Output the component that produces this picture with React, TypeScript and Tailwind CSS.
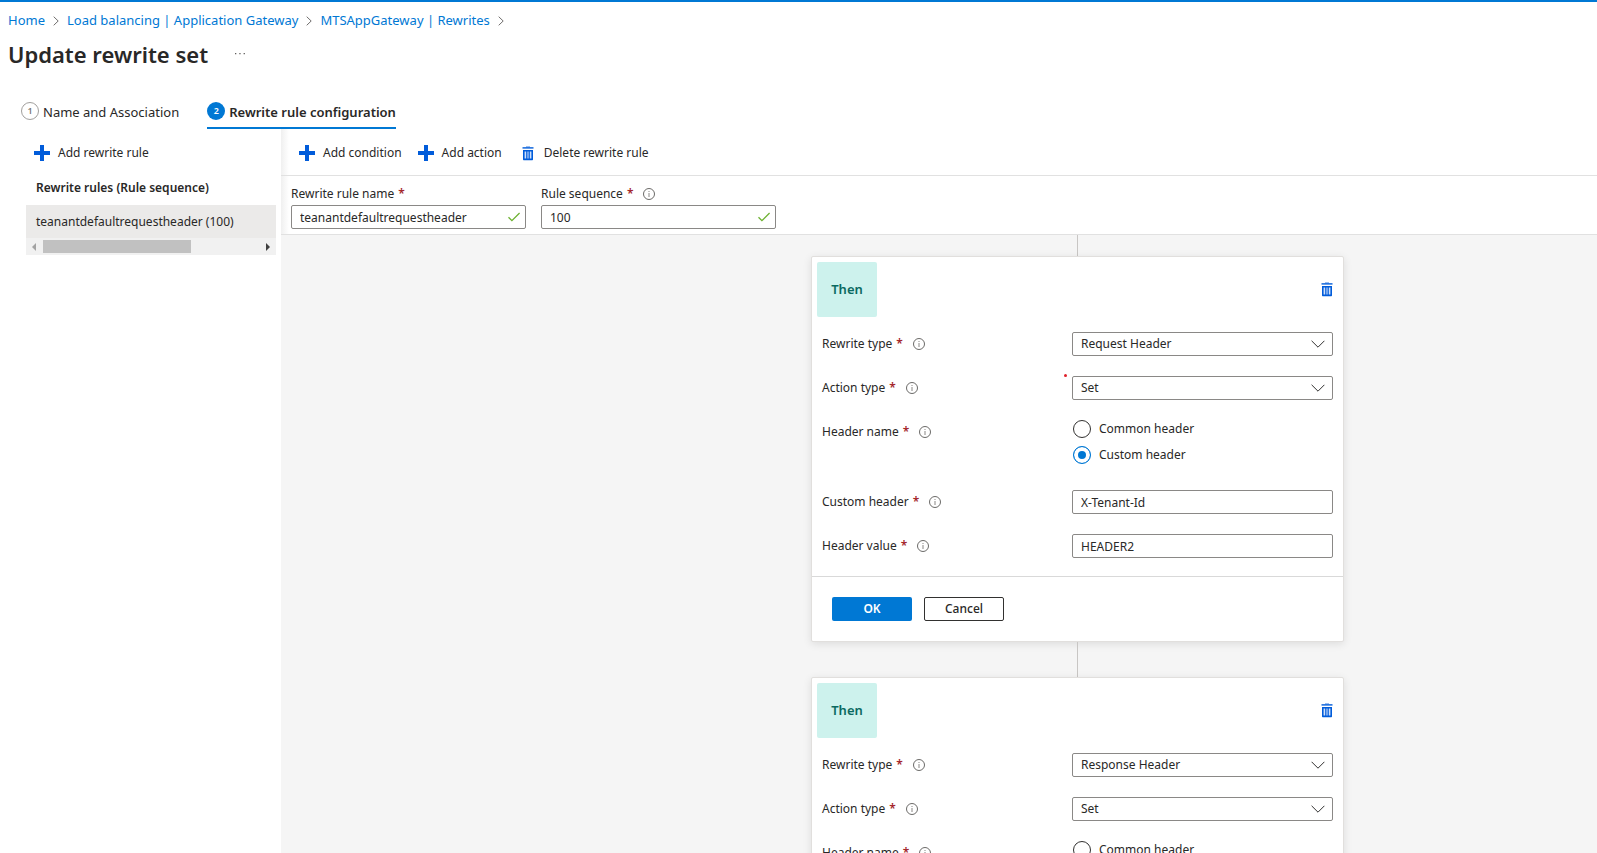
import { useId, useState } from "react";

const BREADCRUMBS = ["Home", "Load balancing | Application Gateway", "MTSAppGateway | Rewrites"];

function PlusIcon() {
  return (
    <svg className="size-4 shrink-0" viewBox="0 0 16 16" aria-hidden="true">
      <path d="M6 0h4v6h6v4h-6v6H6v-6H0V6h6z" fill="#015cda" />
    </svg>
  );
}

function TrashIcon() {
  return (
    <svg className="h-[15px] w-3 shrink-0" viewBox="0 0 12 15" aria-hidden="true">
      <path d="M4 .4h4v1H4z" fill="#5a93e6" />
      <path d="M.5 1.2h11v1.4H.5z" fill="#015cda" />
      <path d="M1 4h10v9.2c0 .6-.4 1-1 1H2c-.6 0-1-.4-1-1z" fill="#015cda" />
      <path d="M2.6 5.5h1.6v7H2.6zM7.8 5.5h1.6v7H7.8z" fill="#cfe0fb" />
      <path d="M5.2 5.5h1.6v7H5.2z" fill="#8fb6f2" />
    </svg>
  );
}

function InfoIcon() {
  return (
    <svg className="ml-[10px] size-3 shrink-0" viewBox="0 0 12 12" aria-hidden="true">
      <circle cx="6" cy="6" r="5.5" fill="none" stroke="#6b6a68" />
      <path d="M5.5 3h1v1h-1zM5.5 5h1v4h-1z" fill="#8a8886" />
    </svg>
  );
}

function CrumbChevron() {
  return (
    <svg className="mx-2 h-[10px] w-[6px] shrink-0" viewBox="0 0 6 10" fill="none" aria-hidden="true">
      <path d="M.7.7 5.2 5 .7 9.3" stroke="#605e5c" strokeWidth="0.9" />
    </svg>
  );
}

function Required() {
  return <span className="ml-1 font-semibold text-[#a4262c]">*</span>;
}

function CheckedInput({ label, value, info }: { label: string; value: string; info?: boolean }) {
  const id = useId();
  const [text, setText] = useState(value);
  return (
    <div className="w-[235px]">
      <div className="flex h-[22px] items-center">
        <label htmlFor={id}>
          {label}
          <Required />
        </label>
        {info && <InfoIcon />}
      </div>
      <div className="relative">
        <input
          id={id}
          value={text}
          onChange={(e) => setText(e.target.value)}
          className="block h-6 w-full rounded-xs border border-[#8a8886] bg-white pr-7 pl-2 outline-none"
        />
        <svg className="absolute top-[7px] right-[6px] h-[10px] w-3" viewBox="0 0 12 10" fill="none" aria-hidden="true">
          <path d="M.5 5.3 3.9 8.7 11.6 1" stroke="#6bb02e" strokeWidth="1.3" />
        </svg>
      </div>
    </div>
  );
}

function FieldLabel({ id, children }: { id?: string; children: string }) {
  return (
    <div className="flex h-6 w-[250px] shrink-0 items-center">
      <label htmlFor={id}>
        {children}
        <Required />
      </label>
      <InfoIcon />
    </div>
  );
}

function SelectRow({ label, options, flagged }: { label: string; options: string[]; flagged?: boolean }) {
  const id = useId();
  return (
    <div className="flex">
      <FieldLabel id={id}>{label}</FieldLabel>
      <div className="relative flex-1">
        {flagged && <span className="absolute -top-[2px] -left-[8px] size-[3px] rounded-full bg-[#e0202a]" />}
        <select
          id={id}
          className="block h-6 w-full appearance-none rounded-xs border border-[#8a8886] bg-white pr-8 pl-2 outline-none"
        >
          {options.map((option) => (
            <option key={option}>{option}</option>
          ))}
        </select>
        <svg
          className="pointer-events-none absolute top-2 right-2 h-2 w-[14px]"
          viewBox="0 0 14 8"
          fill="none"
          aria-hidden="true"
        >
          <path d="M.6.8 7 7.2 13.4.8" stroke="#323130" />
        </svg>
      </div>
    </div>
  );
}

function InputRow({ label, value }: { label: string; value: string }) {
  const id = useId();
  const [text, setText] = useState(value);
  return (
    <div className="flex">
      <FieldLabel id={id}>{label}</FieldLabel>
      <input
        id={id}
        value={text}
        onChange={(e) => setText(e.target.value)}
        className="block h-6 min-w-0 flex-1 rounded-xs border border-[#8a8886] bg-white px-2 outline-none"
      />
    </div>
  );
}

function HeaderNameRow() {
  const name = useId();
  const [kind, setKind] = useState("Custom header");
  return (
    <div className="flex min-h-[50px]">
      <FieldLabel>Header name</FieldLabel>
      <div className="flex flex-col gap-2">
        {["Common header", "Custom header"].map((option) => (
          <label key={option} className="flex items-center gap-2 leading-[18px]">
            <input
              type="radio"
              name={name}
              checked={kind === option}
              onChange={() => setKind(option)}
              className="ml-px size-[18px] appearance-none rounded-full border border-[#323130] bg-white checked:border-[#0078d4] checked:bg-[#0078d4] checked:shadow-[inset_0_0_0_4px_#fff]"
            />
            {option}
          </label>
        ))}
      </div>
    </div>
  );
}

type Action = { types: string[]; header: string; value: string; flagged?: boolean };

const ACTIONS: Action[] = [
  { types: ["Request Header", "Response Header", "URL"], header: "X-Tenant-Id", value: "HEADER2", flagged: true },
  { types: ["Response Header", "Request Header", "URL"], header: "X-Tenant-Id", value: "HEADER2" },
];

function ActionCard({ action }: { action: Action }) {
  return (
    <section className="w-[533px] shrink-0 rounded-xs border border-[#e1dfdd] bg-white shadow-[0_2px_8px_rgba(0,0,0,0.1)]">
      <header className="flex items-center justify-between p-[5px]">
        <h2 className="flex h-[55px] w-[60px] items-center justify-center rounded-xs bg-[#cdf2ed] text-[13px] font-semibold text-[#0b6a61]">
          Then
        </h2>
        <button type="button" aria-label="Delete action" className="mr-[5px]">
          <TrashIcon />
        </button>
      </header>
      <div className="flex flex-col gap-5 px-[10px] pt-[10px] pb-[18px]">
        <SelectRow label="Rewrite type" options={action.types} />
        <SelectRow label="Action type" options={["Set", "Delete"]} flagged={action.flagged} />
        <HeaderNameRow />
        <InputRow label="Custom header" value={action.header} />
        <InputRow label="Header value" value={action.value} />
      </div>
      <footer className="flex gap-3 border-t border-[#d9d9d9] p-5">
        <button type="button" className="h-6 w-20 rounded-xs bg-[#0078d4] font-semibold text-white">
          OK
        </button>
        <button type="button" className="h-6 w-20 rounded-xs border border-[#323130] bg-white font-medium">
          Cancel
        </button>
      </footer>
    </section>
  );
}

function Sidebar() {
  return (
    <aside className="w-[281px] shrink-0 pr-[5px] pl-[26px]">
      <button type="button" className="flex h-12 items-center gap-2 pl-2">
        <PlusIcon />
        Add rewrite rule
      </button>
      <h2 className="flex h-7 items-start pt-[2px] pl-[10px] font-semibold">Rewrite rules (Rule sequence)</h2>
      <a href="#rule" className="flex h-[33px] items-center bg-[#ebeae9] pt-px pl-[10px]">
        teanantdefaultrequestheader (100)
      </a>
      <div className="flex h-[17px] items-center bg-[#f1f1f1] px-[6px]" aria-hidden="true">
        <svg className="h-2 w-1" viewBox="0 0 4 8">
          <path d="M4 0v8L0 4z" fill="#a3a3a3" />
        </svg>
        <div className="mx-[7px] flex-1">
          <div className="h-[13px] w-[148px] bg-[#c1c1c1]" />
        </div>
        <svg className="h-2 w-1" viewBox="0 0 4 8">
          <path d="M0 0v8l4-4z" fill="#404040" />
        </svg>
      </div>
    </aside>
  );
}

export default function App() {
  return (
    <div className="flex h-screen flex-col overflow-hidden border-t-2 border-[#0078d4] bg-white font-['Noto_Sans','Open_Sans',sans-serif] text-[12px] text-[#292827]">
      <nav aria-label="Breadcrumb" className="flex h-9 shrink-0 items-center pt-px pl-2 text-[13px]">
        {BREADCRUMBS.map((crumb) => (
          <span key={crumb} className="flex items-center">
            <a href="#crumb" className="text-[#0078d4]">
              {crumb}
            </a>
            <CrumbChevron />
          </span>
        ))}
      </nav>
      <div className="flex h-8 shrink-0 items-center gap-[26px] pl-2">
        <h1 className="text-[22px] font-semibold">Update rewrite set</h1>
        <button type="button" aria-label="More">
          <svg className="h-2 w-3" viewBox="0 0 12 8" aria-hidden="true">
            <path d="M1 3h1.3v1.3H1zM5.3 3h1.3v1.3H5.3zM9.6 3h1.3v1.3H9.6z" fill="#605e5c" />
          </svg>
        </button>
      </div>
      <div role="tablist" className="flex h-[59px] shrink-0 items-end gap-7 pl-[21px] text-[13px]">
        <button
          type="button"
          role="tab"
          aria-selected="false"
          className="flex h-9 items-center gap-1 border-b-2 border-transparent pt-[6px]"
        >
          <span className="mb-1 flex size-[18px] items-center justify-center rounded-full border border-[#a19f9d] text-[9px] font-semibold text-[#797775]">
            1
          </span>
          Name and Association
        </button>
        <button
          type="button"
          role="tab"
          aria-selected="true"
          className="flex h-9 items-center gap-1 border-b-2 border-[#0078d4] pt-[6px] font-semibold"
        >
          <span className="mb-1 flex size-[18px] items-center justify-center rounded-full bg-[#0078d4] text-[9px] text-white">
            2
          </span>
          Rewrite rule configuration
        </button>
      </div>
      <div className="flex min-h-0 flex-1">
        <Sidebar />
        <main className="flex min-w-0 flex-1 flex-col">
          <div className="bg-linear-to-r from-[#f0f0f0] to-white to-[8px]">
            <div className="flex h-[47px] items-center gap-4 border-b border-[#e1e1e1] pt-[2px] pl-[18px]">
              <button type="button" className="flex items-center gap-2">
                <PlusIcon />
                Add condition
              </button>
              <button type="button" className="flex items-center gap-2">
                <PlusIcon />
                Add action
              </button>
              <button type="button" className="ml-1 flex items-center gap-[10px]">
                <TrashIcon />
                Delete rewrite rule
              </button>
            </div>
            <div className="flex gap-[15px] border-b border-[#e1e1e1] pt-[7px] pb-[5px] pl-[10px]">
              <CheckedInput label="Rewrite rule name" value="teanantdefaultrequestheader" />
              <CheckedInput label="Rule sequence" value="100" info />
            </div>
          </div>
          <div className="flex min-h-0 flex-1 flex-col items-center overflow-hidden bg-[#f5f5f5] pl-[277px]">
            <div className="h-[21px] w-px shrink-0 bg-[#c8c6c4]" />
            <ActionCard action={ACTIONS[0]} />
            <div className="h-[35px] w-px shrink-0 bg-[#c8c6c4]" />
            <ActionCard action={ACTIONS[1]} />
          </div>
        </main>
      </div>
    </div>
  );
}
